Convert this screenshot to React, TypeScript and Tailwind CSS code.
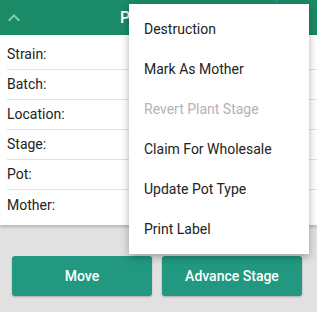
import React from 'react'

const rows = ['Strain:', 'Batch:', 'Location:', 'Stage:', 'Pot:', 'Mother:']

const menuItems = [
  { label: 'Destruction' },
  { label: 'Mark As Mother' },
  { label: 'Revert Plant Stage', disabled: true },
  { label: 'Claim For Wholesale' },
  { label: 'Update Pot Type' },
  { label: 'Print Label' },
]

export default function App() {
  return (
    <div className="relative h-[312px] w-[317px] overflow-hidden bg-[#e1e1e1] font-['Roboto',sans-serif]">
      {/* header */}
      <div className="flex h-[35px] items-center bg-[#1b8a66]">
        <svg viewBox="0 0 24 24" className="ml-[2px] h-6 w-6 fill-[#7fcfae]">
          <path d="M12 8l-6 6 1.41 1.41L12 10.83l4.59 4.58L18 14z" />
        </svg>
        <span className="ml-[94px] text-[16px] font-medium text-white">Plant Details</span>
        <div className="flex-1" />
        <div className="mr-[40px] h-full w-px bg-[#3c8fa6]" />
      </div>

      {/* details card */}
      <div className="bg-white pt-[5px] pb-[5px] shadow-[0_2px_3px_rgba(0,0,0,0.2)]">
        {rows.map((label, i) => (
          <div
            key={label}
            className={
              'ml-[7px] flex h-[30px] items-center text-[14px] text-[#222] ' +
              (i < rows.length - 1 ? 'border-b border-[#e2e2e2]' : '')
            }
          >
            {label}
          </div>
        ))}
      </div>

      {/* actions */}
      <div className="mt-[31px] flex gap-[10px] px-[12px]">
        <button
          type="button"
          className="h-10 w-[140px] rounded-[3px] bg-[#21987f] text-[14px] font-medium text-white shadow-[0_1px_2px_rgba(0,0,0,0.25)]"
        >
          Move
        </button>
        <button
          type="button"
          className="h-10 w-[140px] rounded-[3px] bg-[#21987f] text-[14px] font-medium text-white shadow-[0_1px_2px_rgba(0,0,0,0.25)]"
        >
          Advance Stage
        </button>
      </div>

      {/* dropdown menu */}
      <div className="absolute top-[4px] left-[129px] w-[180px] bg-white py-[5px] shadow-[0_3px_8px_rgba(0,0,0,0.3)]">
        {menuItems.map((item) => (
          <div
            key={item.label}
            className={
              'flex h-10 items-center pl-[15px] text-[14px] ' +
              (item.disabled ? 'text-[#b3b3b3]' : 'text-[#222]')
            }
          >
            {item.label}
          </div>
        ))}
      </div>
    </div>
  )
}
